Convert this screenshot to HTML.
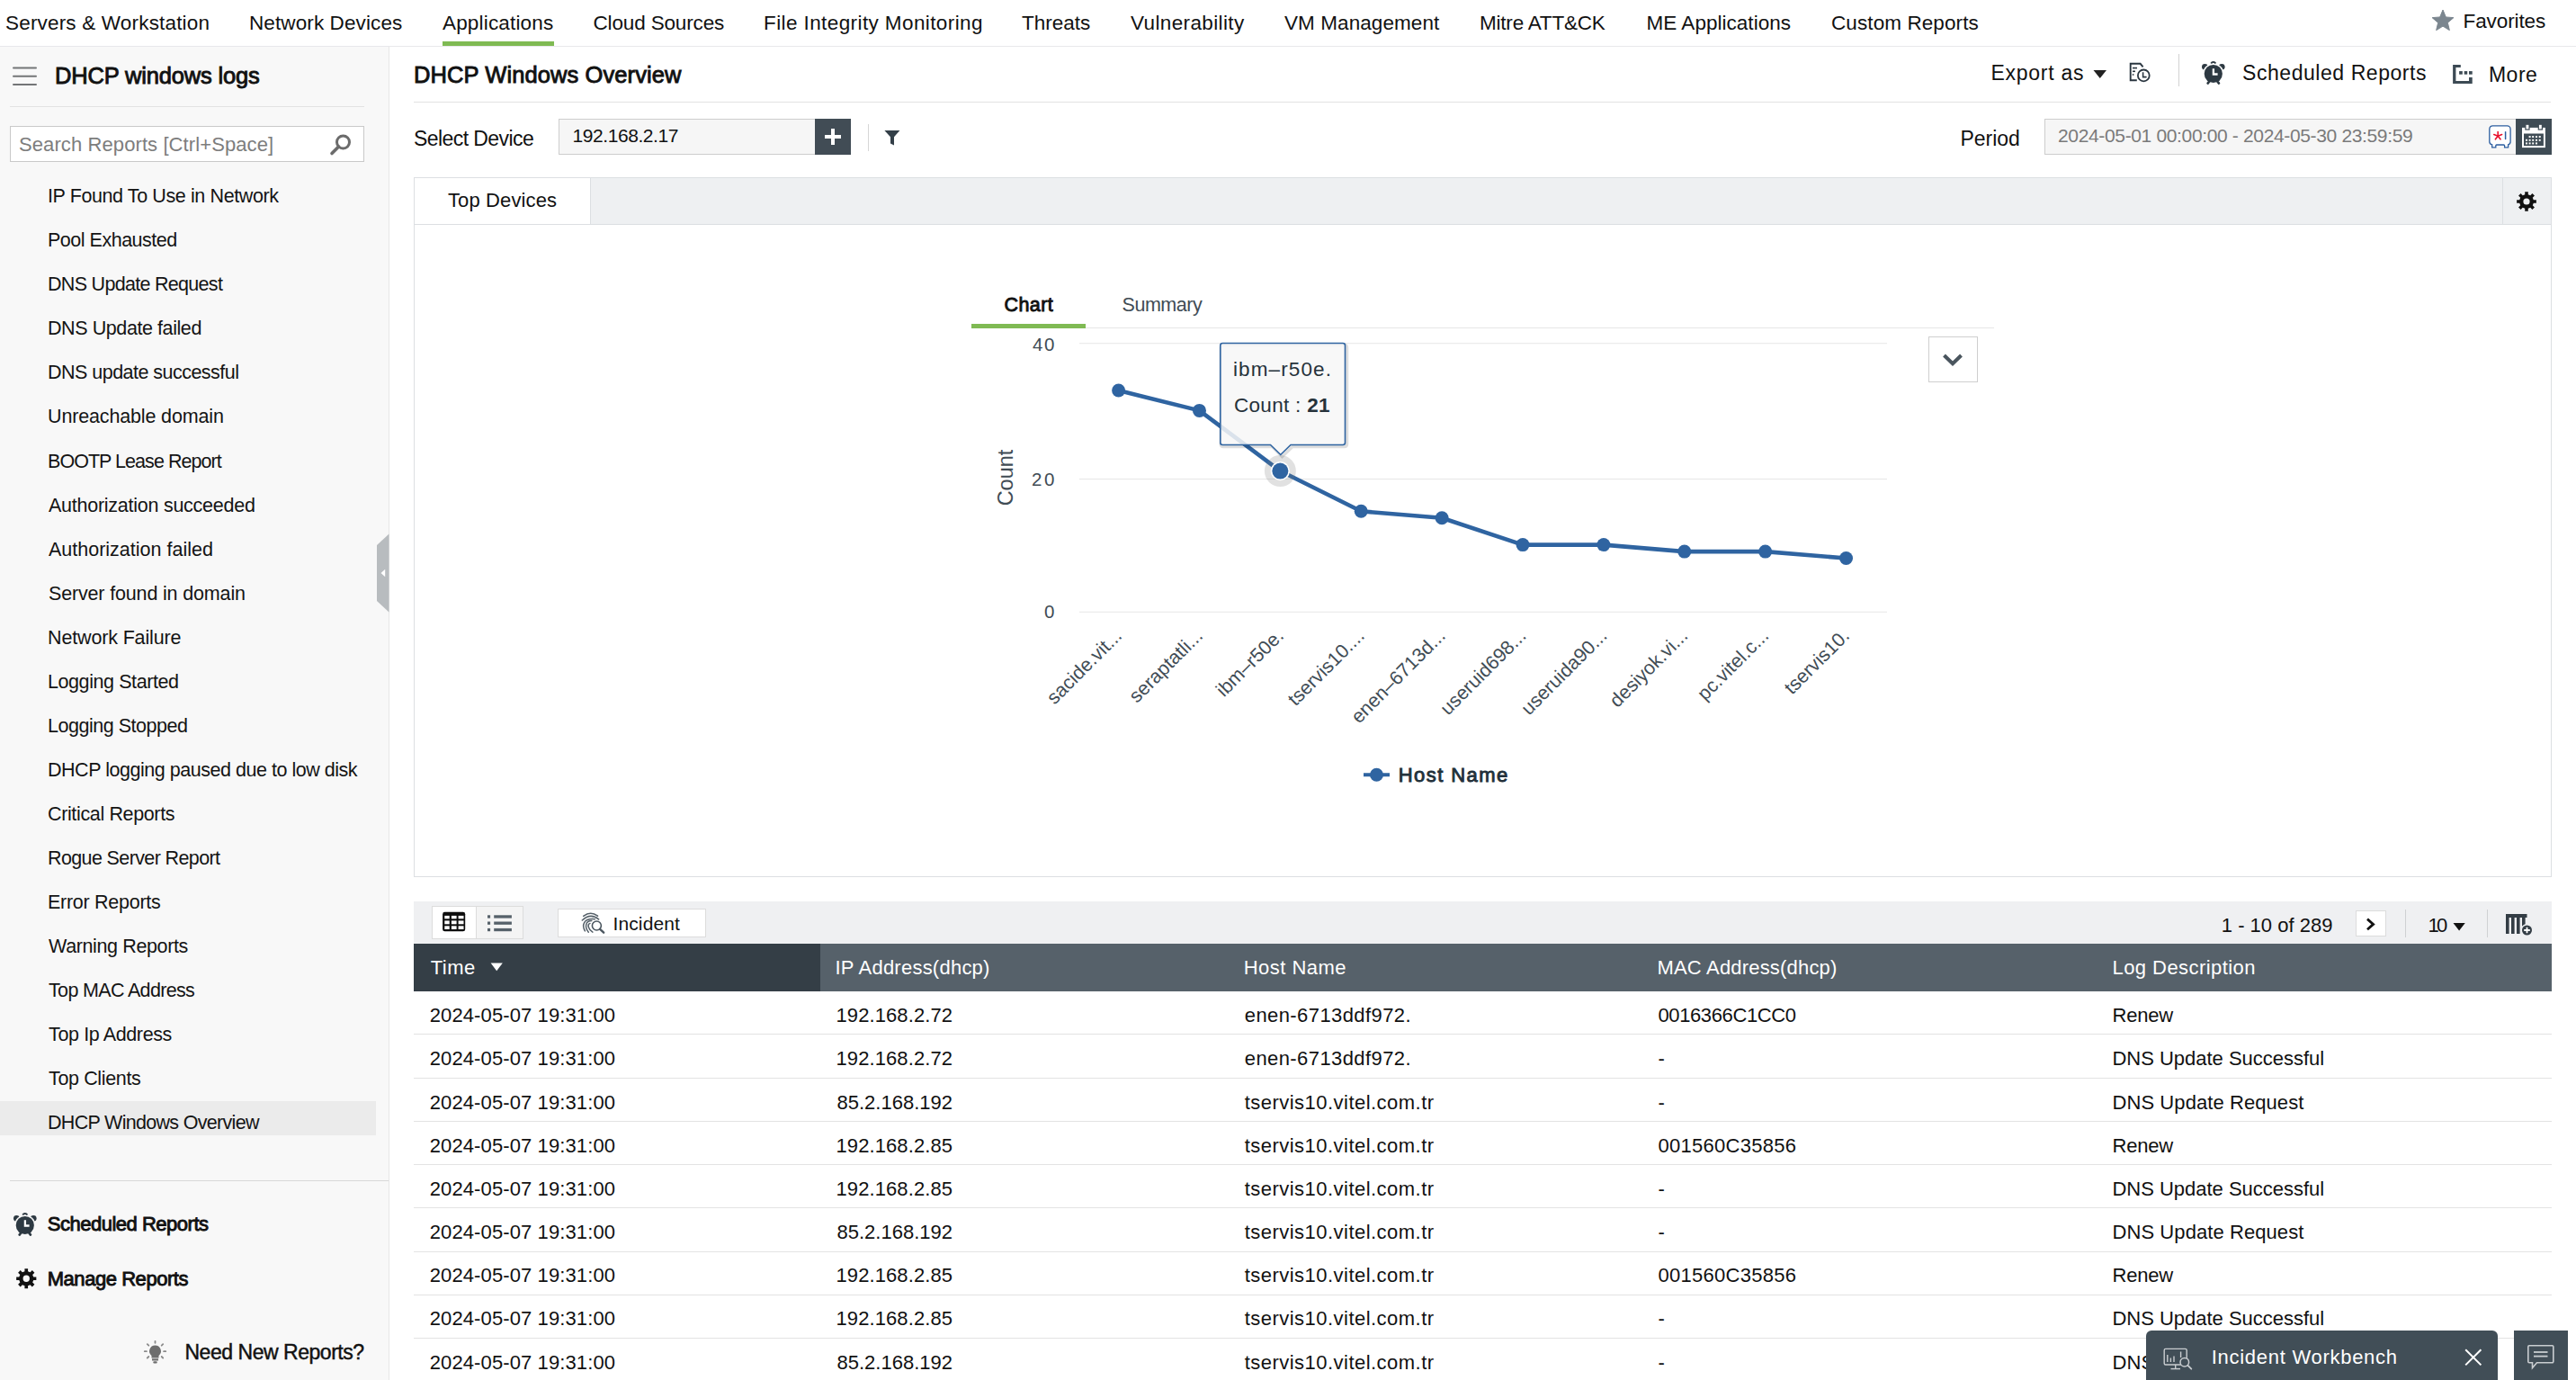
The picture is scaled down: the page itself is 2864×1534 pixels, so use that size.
<!DOCTYPE html>
<html><head><meta charset="utf-8"><title>DHCP Windows Overview</title>
<style>
html,body{margin:0;padding:0;}
body{width:2864px;height:1534px;overflow:hidden;position:relative;background:#fff;font-family:"Liberation Sans",sans-serif;}
.a{position:absolute;box-sizing:border-box;}
.t{position:absolute;white-space:nowrap;font-family:"Liberation Sans",sans-serif;}
svg{position:absolute;overflow:visible;}
svg text{font-family:"Liberation Sans",sans-serif;}
</style></head>
<body>
<!-- ===== top nav ===== -->
<div class="a" style="left:0;top:51px;width:2864px;height:1px;background:#e8e8eb"></div>
<div class="a" style="left:492px;top:46px;width:124px;height:5px;background:#7fba53"></div>
<svg style="left:2704px;top:11px" width="24" height="23" viewBox="0 0 24 23"><path d="M12.00,0.00 L15.29,7.97 L23.89,8.64 L17.33,14.23 L19.35,22.61 L12.00,18.10 L4.65,22.61 L6.67,14.23 L0.11,8.64 L8.71,7.97 Z" fill="#7b868f" stroke="#7b868f" stroke-width="1" stroke-linejoin="round"/></svg>

<!-- ===== sidebar ===== -->
<div class="a" style="left:0;top:52px;width:433px;height:1482px;background:#f8f8f8;border-right:1px solid #e6e6e6"></div>
<svg style="left:12px;top:72px" width="32" height="26" viewBox="12 72 32 26"><g stroke="#737577" stroke-width="2" stroke-linecap="round"><line x1="15" y1="75.6" x2="40" y2="75.6"/><line x1="15" y1="84.75" x2="40" y2="84.75"/><line x1="15" y1="93.9" x2="40" y2="93.9"/></g></svg>
<div class="a" style="left:11px;top:118px;width:394px;height:1px;background:#e2e2e2"></div>
<div class="a" style="left:11px;top:140px;width:394px;height:40px;background:#fff;border:1px solid #c9c9c9"></div>
<svg style="left:366px;top:148px" width="26" height="26" viewBox="0 0 26 26"><circle cx="15.5" cy="10" r="7" fill="none" stroke="#6b6b6b" stroke-width="3"/><line x1="10.5" y1="15" x2="3" y2="22.5" stroke="#6b6b6b" stroke-width="3.6" stroke-linecap="round"/></svg>
<div class="a" style="left:0;top:1224px;width:418px;height:38px;background:#ebebeb"></div>
<svg style="left:418px;top:592px" width="16" height="90" viewBox="418 592 16 90"><polygon points="432.5,593.5 419,606 419,668 432.5,680.5" fill="#b8bcbf"/><polygon points="423.5,637 428.2,632.8 428.2,641.2" fill="#fff"/></svg>
<div class="a" style="left:11px;top:1312px;width:421px;height:1px;background:#d9d9d9"></div>
<!-- alarm (sidebar) -->
<svg style="left:15px;top:1347px" width="26" height="28" viewBox="0 0 26 28"><circle cx="3.4" cy="7.3" r="3.4" fill="#2d3942"/><circle cx="22.2" cy="7.3" r="3.4" fill="#2d3942"/><circle cx="12.8" cy="15" r="11.6" fill="#f8f8f8"/><circle cx="12.8" cy="15" r="10.1" fill="#2d3942"/><path d="M10.2,3.4 A3.1,3.1 0 0 1 15.4,3.4" fill="none" stroke="#2d3942" stroke-width="1.9"/><line x1="8.2" y1="23.6" x2="6.6" y2="25.6" stroke="#2d3942" stroke-width="2.6" stroke-linecap="round"/><line x1="17.4" y1="23.6" x2="19" y2="25.6" stroke="#2d3942" stroke-width="2.6" stroke-linecap="round"/><path d="M12.9,9.2 V15.5 H17.6" fill="none" stroke="#fff" stroke-width="2.3"/></svg>
<!-- gear (sidebar) -->
<svg style="left:17.5px;top:1410px" width="22.5" height="22.5" viewBox="0 0 22 22"><path fill-rule="evenodd" fill="#111" d="M21.85,9.19 L21.85,12.81 L18.80,12.77 L17.77,15.27 L19.95,17.40 L17.40,19.95 L15.27,17.77 L12.77,18.80 L12.81,21.85 L9.19,21.85 L9.23,18.80 L6.73,17.77 L4.60,19.95 L2.05,17.40 L4.23,15.27 L3.20,12.77 L0.15,12.81 L0.15,9.19 L3.20,9.23 L4.23,6.73 L2.05,4.60 L4.60,2.05 L6.73,4.23 L9.23,3.20 L9.19,0.15 L12.81,0.15 L12.77,3.20 L15.27,4.23 L17.40,2.05 L19.95,4.60 L17.77,6.73 L18.80,9.23 Z M11,7.4 A3.6,3.6 0 1 0 11,14.6 A3.6,3.6 0 1 0 11,7.4 Z"/></svg>
<!-- bulb -->
<svg style="left:160px;top:1490px" width="26" height="27" viewBox="0 0 26 27"><path d="M12.5,5.5 a6.4,6.4 0 0 1 4,11.4 v2.6 h-8 v-2.6 a6.4,6.4 0 0 1 4,-11.4 z" fill="#6e6e6e"/><rect x="9" y="20.3" width="7" height="2.2" fill="#6e6e6e"/><rect x="10.3" y="23.2" width="4.4" height="2.2" rx="1" fill="#6e6e6e"/><g stroke="#8a8a8a" stroke-width="1.8" stroke-linecap="round"><line x1="12.5" y1="0.8" x2="12.5" y2="2.8"/><line x1="3.8" y1="4.2" x2="5.3" y2="5.7"/><line x1="21.2" y1="4.2" x2="19.7" y2="5.7"/><line x1="0.8" y1="12.2" x2="2.9" y2="12.2"/><line x1="24.2" y1="12.2" x2="22.1" y2="12.2"/><line x1="3.8" y1="19.5" x2="5.3" y2="18"/><line x1="21.2" y1="19.5" x2="19.7" y2="18"/></g></svg>

<!-- ===== main header ===== -->
<svg style="left:2326px;top:77px" width="18" height="12" viewBox="0 0 18 12"><polygon points="1.5,1 16,1 8.75,10" fill="#222"/></svg>
<svg style="left:2366px;top:68px" width="28" height="25" viewBox="2366 68 28 25"><path d="M2375.8,89.3 H2368.7 V70.8 H2379.6 L2382.6,74.3" fill="none" stroke="#2a3640" stroke-width="1.9"/><line x1="2371" y1="75.6" x2="2376" y2="75.6" stroke="#2a3640" stroke-width="1.6"/><line x1="2371" y1="79.3" x2="2374" y2="79.3" stroke="#2a3640" stroke-width="1.6"/><rect x="2370.8" y="82.2" width="1.6" height="1.6" fill="#2a3640"/><circle cx="2383.3" cy="83.9" r="6.4" fill="#fff" stroke="#2a3640" stroke-width="1.8"/><path d="M2382.6,80.3 V85.6 H2386.6" fill="none" stroke="#2a3640" stroke-width="1.6"/></svg>
<div class="a" style="left:2422px;top:59.5px;width:1px;height:36px;background:#d3d3d3"></div>
<svg style="left:2448px;top:67px" width="26" height="28" viewBox="0 0 26 28"><circle cx="3.4" cy="7.3" r="3.4" fill="#2d3942"/><circle cx="22.2" cy="7.3" r="3.4" fill="#2d3942"/><circle cx="12.8" cy="15" r="11.6" fill="#fff"/><circle cx="12.8" cy="15" r="10.1" fill="#2d3942"/><path d="M10.2,3.4 A3.1,3.1 0 0 1 15.4,3.4" fill="none" stroke="#2d3942" stroke-width="1.9"/><line x1="8.2" y1="23.6" x2="6.6" y2="25.6" stroke="#2d3942" stroke-width="2.6" stroke-linecap="round"/><line x1="17.4" y1="23.6" x2="19" y2="25.6" stroke="#2d3942" stroke-width="2.6" stroke-linecap="round"/><path d="M12.9,9.2 V15.5 H17.6" fill="none" stroke="#fff" stroke-width="2.3"/></svg>
<svg style="left:2726px;top:71px" width="24" height="23" viewBox="2726 71 24 23"><path d="M2727.1,71.9 H2735.8 V75 H2730.4 V90 H2745 V86.1 H2748.7 V93.1 H2727.1 Z" fill="#3c4a54"/><rect x="2734.1" y="79.1" width="3.7" height="3.6" fill="#3c4a54"/><rect x="2739.7" y="79.1" width="3.5" height="3.6" fill="#3c4a54"/><rect x="2745" y="79.1" width="3.7" height="3.6" fill="#3c4a54"/></svg>
<div class="a" style="left:460px;top:113px;width:2376px;height:1px;background:#e2e2e2"></div>

<!-- device row -->
<div class="a" style="left:621px;top:132px;width:286px;height:40px;background:#f6f6f6;border:1px solid #cdcdcd"></div>
<div class="a" style="left:906px;top:132px;width:40px;height:40px;background:#414c55"></div>
<div class="a" style="left:917px;top:150px;width:18px;height:4.2px;background:#fff"></div>
<div class="a" style="left:923.9px;top:143px;width:4.2px;height:18px;background:#fff"></div>
<div class="a" style="left:965px;top:138px;width:1px;height:29.5px;background:#d6d6d6"></div>
<svg style="left:982px;top:144px" width="20" height="19" viewBox="982 144 20 19"><path d="M983.4,145.1 H1000.4 L994,152.3 V161.6 L990,159.4 V152.3 Z" fill="#333f48"/></svg>
<div class="a" style="left:2273px;top:132px;width:525px;height:40px;background:#f6f6f6;border:1px solid #cdcdcd"></div>
<svg style="left:2766px;top:138px" width="28" height="28" viewBox="2766 138 28 28"><path d="M2771.5,139.8 H2787.5 A3.6,3.6 0 0 1 2791.1,143.4 V157.4 A3.6,3.6 0 0 1 2788.6,160.8 V163.9 H2784.6 V161.8 A1.4,1.4 0 0 0 2783.2,161 H2776.2 A1.4,1.4 0 0 0 2774.8,161.8 V163.9 H2770.7 V160.8 A3.6,3.6 0 0 1 2767.8,157.4 V143.4 A3.6,3.6 0 0 1 2771.5,139.8 Z" fill="#fff" stroke="#2c5ea0" stroke-width="1.3"/><g stroke="#e8112d" stroke-width="1.6" stroke-linecap="round"><line x1="2777.2" y1="146.6" x2="2777.2" y2="151.2"/><line x1="2772.8" y1="149.6" x2="2777.2" y2="151.2"/><line x1="2781.6" y1="149.6" x2="2777.2" y2="151.2"/><line x1="2774.4" y1="154.8" x2="2777.2" y2="151.2"/><line x1="2780" y1="154.8" x2="2777.2" y2="151.2"/></g><line x1="2785.6" y1="146.8" x2="2785.6" y2="154.4" stroke="#2c5ea0" stroke-width="1.5" stroke-linecap="round"/></svg>
<div class="a" style="left:2797px;top:132px;width:40px;height:40px;background:#3f4c55"></div>
<svg style="left:2797px;top:132px" width="40" height="40" viewBox="2797 132 40 40"><rect x="2805" y="142.9" width="23.9" height="20.2" fill="none" stroke="#fff" stroke-width="2"/><rect x="2805" y="142.9" width="23.9" height="5.6" fill="#fff"/><rect x="2807.9" y="138.2" width="4.1" height="5.8" fill="#fff" stroke="#3f4c55" stroke-width="1.2"/><rect x="2822.3" y="138.2" width="4.1" height="5.8" fill="#fff" stroke="#3f4c55" stroke-width="1.2"/><g fill="#fff"><rect x="2811.6" y="151" width="2" height="2"/><rect x="2815.2" y="151" width="2" height="2"/><rect x="2819" y="151" width="2" height="2"/><rect x="2822.7" y="151" width="2" height="2"/><rect x="2808" y="154.8" width="2" height="2"/><rect x="2811.6" y="154.8" width="2" height="2"/><rect x="2815.2" y="154.8" width="2" height="2"/><rect x="2819" y="154.8" width="2" height="2"/><rect x="2822.7" y="154.8" width="2" height="2"/><rect x="2808" y="158.4" width="2" height="2"/><rect x="2811.6" y="158.4" width="2" height="2"/><rect x="2815.2" y="158.4" width="2" height="2"/><rect x="2819" y="158.4" width="2" height="2"/></g></svg>

<!-- ===== panel ===== -->
<div class="a" style="left:460px;top:197px;width:2377px;height:778px;border:1px solid #dcdfe2"></div>
<div class="a" style="left:461px;top:198px;width:2375px;height:51px;background:#eef0f2"></div>
<div class="a" style="left:461px;top:198px;width:196px;height:51px;background:#fff;border-right:1px solid #dcdfe2"></div>
<div class="a" style="left:461px;top:249px;width:2375px;height:1px;background:#dcdfe2"></div>
<div class="a" style="left:2782px;top:198px;width:1px;height:51px;background:#dcdfe2"></div>
<svg style="left:2797.5px;top:212.5px" width="22" height="22" viewBox="0 0 22 22"><path fill-rule="evenodd" fill="#111" d="M21.85,9.19 L21.85,12.81 L18.80,12.77 L17.77,15.27 L19.95,17.40 L17.40,19.95 L15.27,17.77 L12.77,18.80 L12.81,21.85 L9.19,21.85 L9.23,18.80 L6.73,17.77 L4.60,19.95 L2.05,17.40 L4.23,15.27 L3.20,12.77 L0.15,12.81 L0.15,9.19 L3.20,9.23 L4.23,6.73 L2.05,4.60 L4.60,2.05 L6.73,4.23 L9.23,3.20 L9.19,0.15 L12.81,0.15 L12.77,3.20 L15.27,4.23 L17.40,2.05 L19.95,4.60 L17.77,6.73 L18.80,9.23 Z M11,7.4 A3.6,3.6 0 1 0 11,14.6 A3.6,3.6 0 1 0 11,7.4 Z"/></svg>

<!-- chart svg (page coordinates) -->
<svg style="left:0;top:0" width="2864" height="1534" viewBox="0 0 2864 1534">
<line x1="1080" y1="364.5" x2="2217" y2="364.5" stroke="#e6e6e6" stroke-width="1"/>
<rect x="1080" y="360" width="127" height="5" fill="#7fba53"/>
<rect x="2144.5" y="374.5" width="54" height="50" fill="#fff" stroke="#cfcfcf" stroke-width="1"/>
<polyline points="2161.5,395 2171,404.3 2180.5,395" fill="none" stroke="#4a555e" stroke-width="4"/>
<g stroke="#e6e6e6" stroke-width="1.2">
<line x1="1200" y1="381.75" x2="2098" y2="381.75"/>
<line x1="1200" y1="532.5" x2="2098" y2="532.5"/>
<line x1="1200" y1="680.25" x2="2098" y2="680.25"/>
</g>
<text transform="translate(1126,531) rotate(-90)" text-anchor="middle" style="font-size:23.5px;fill:#414c55">Count</text>
<path d="M1243.60,433.99 L1333.48,456.38 L1423.36,523.54 L1513.24,568.31 L1603.12,575.77 L1693.00,605.62 L1782.88,605.62 L1872.76,613.09 L1962.64,613.09 L2052.52,620.55" fill="none" stroke="#2f64a1" stroke-width="4.6" stroke-linejoin="round" stroke-linecap="round"/>
<circle cx="1243.60" cy="433.99" r="7.5" fill="#2f64a1"/>
<circle cx="1333.48" cy="456.38" r="7.5" fill="#2f64a1"/>
<circle cx="1513.24" cy="568.31" r="7.5" fill="#2f64a1"/>
<circle cx="1603.12" cy="575.77" r="7.5" fill="#2f64a1"/>
<circle cx="1693.00" cy="605.62" r="7.5" fill="#2f64a1"/>
<circle cx="1782.88" cy="605.62" r="7.5" fill="#2f64a1"/>
<circle cx="1872.76" cy="613.09" r="7.5" fill="#2f64a1"/>
<circle cx="1962.64" cy="613.09" r="7.5" fill="#2f64a1"/>
<circle cx="2052.52" cy="620.55" r="7.5" fill="#2f64a1"/>
<circle cx="1423.36" cy="523.54" r="17.5" fill="rgba(120,120,120,0.22)"/>
<circle cx="1423.36" cy="523.54" r="10.6" fill="#fff"/>
<circle cx="1423.36" cy="523.54" r="9" fill="#2f64a1"/>
<path d="M1359.8,383.5 H1495 A2.5,2.5 0 0 1 1497.5,386 V494 A2.5,2.5 0 0 1 1495,496.5 H1437 L1425.5,507.5 L1414.5,496.5 H1359.8 A2.5,2.5 0 0 1 1357.3,494 V386 A2.5,2.5 0 0 1 1359.8,383.5 Z" fill="none" stroke="rgba(0,0,0,0.13)" stroke-width="3.5"/>
<path d="M1359.3,381.5 H1493 A2.5,2.5 0 0 1 1495.5,384 V492 A2.5,2.5 0 0 1 1493,494.5 H1435 L1423.75,505.5 L1412.5,494.5 H1359.3 A2.5,2.5 0 0 1 1356.8,492 V384 A2.5,2.5 0 0 1 1359.3,381.5 Z" fill="rgba(247,247,247,0.86)" stroke="#2f64a1" stroke-width="1.6"/>
<text x="1372" y="458" style="font-size:22.5px;fill:#26323b;letter-spacing:0.3px">Count : <tspan style="font-weight:700">21</tspan></text>
<line x1="1516" y1="861.25" x2="1545" y2="861.25" stroke="#2f64a1" stroke-width="4"/>
<circle cx="1530.5" cy="861.25" r="7.5" fill="#2f64a1"/>
<text x="1116.50" y="345.50" style="font-size:21.5px;fill:#111;stroke:#111;stroke-width:0.9px;letter-spacing:0.412px;">Chart</text>
<text x="1247.50" y="345.50" style="font-size:21.5px;fill:#414c55;letter-spacing:-0.456px;">Summary</text>
<text x="1148.10" y="390.00" style="font-size:20.5px;fill:#414c55;letter-spacing:1.499px;">40</text>
<text x="1147.10" y="540.00" style="font-size:20.5px;fill:#414c55;letter-spacing:2.499px;">20</text>
<text x="1161.00" y="687.00" style="font-size:20.5px;fill:#414c55;">0</text>
<text x="1371.00" y="417.50" style="font-size:22.5px;fill:#26323b;letter-spacing:1.119px;">ibm–r50e.</text>
<text x="1554.75" y="869.00" style="font-size:22px;fill:#22303a;stroke:#22303a;stroke-width:0.9px;letter-spacing:1.432px;">Host Name</text>
<text transform="translate(1248.60,708) rotate(-45)" text-anchor="end" style="font-size:21.5px;fill:#414c55">sacide.vit...</text>
<text transform="translate(1338.48,708) rotate(-45)" text-anchor="end" style="font-size:21.5px;fill:#414c55">seraptatli...</text>
<text transform="translate(1428.36,708) rotate(-45)" text-anchor="end" style="font-size:21.5px;fill:#414c55">ibm–r50e.</text>
<text transform="translate(1518.24,708) rotate(-45)" text-anchor="end" style="font-size:21.5px;fill:#414c55">tservis10....</text>
<text transform="translate(1608.12,708) rotate(-45)" text-anchor="end" style="font-size:21.5px;fill:#414c55">enen–6713d...</text>
<text transform="translate(1698.00,708) rotate(-45)" text-anchor="end" style="font-size:21.5px;fill:#414c55">useruid698...</text>
<text transform="translate(1787.88,708) rotate(-45)" text-anchor="end" style="font-size:21.5px;fill:#414c55">useruida90...</text>
<text transform="translate(1877.76,708) rotate(-45)" text-anchor="end" style="font-size:21.5px;fill:#414c55">desiyok.vi...</text>
<text transform="translate(1967.64,708) rotate(-45)" text-anchor="end" style="font-size:21.5px;fill:#414c55">pc.vitel.c...</text>
<text transform="translate(2057.52,708) rotate(-45)" text-anchor="end" style="font-size:21.5px;fill:#414c55">tservis10.</text>
</svg>

<!-- ===== table toolbar ===== -->
<div class="a" style="left:460px;top:1002px;width:2377px;height:47px;background:#eff0f2"></div>
<div class="a" style="left:479.5px;top:1006.5px;width:102px;height:37px;background:#f4f4f4;border:1px solid #dcdcdc"></div>
<div class="a" style="left:480.5px;top:1007.5px;width:49px;height:35px;background:#fff;border-right:1px solid #dcdcdc"></div>
<svg style="left:491px;top:1013px" width="28" height="24" viewBox="491 1013 28 24"><rect x="492.1" y="1013.8" width="25.1" height="21.5" rx="2.4" fill="#0d0d0d"/><g fill="#fff"><rect x="494.3" y="1017.9" width="5.4" height="3.4"/><rect x="501.9" y="1017.9" width="5.7" height="3.4"/><rect x="509.6" y="1017.9" width="5.9" height="3.4"/><rect x="494.3" y="1023.4" width="5.4" height="3.9"/><rect x="501.9" y="1023.4" width="5.7" height="3.9"/><rect x="509.6" y="1023.4" width="5.9" height="3.9"/><rect x="494.3" y="1029.3" width="5.4" height="3.7"/><rect x="501.9" y="1029.3" width="5.7" height="3.7"/><rect x="509.6" y="1029.3" width="5.9" height="3.7"/></g></svg>
<svg style="left:540px;top:1016px" width="30" height="21" viewBox="540 1016 30 21"><g fill="#56616a"><rect x="542" y="1017.3" width="3.1" height="3.3"/><rect x="549.2" y="1017.3" width="19.7" height="3.3"/><rect x="542" y="1024.5" width="3.1" height="3.3"/><rect x="549.2" y="1024.5" width="19.7" height="3.3"/><rect x="542" y="1031.9" width="3.1" height="3.3"/><rect x="549.2" y="1031.9" width="19.7" height="3.3"/></g></svg>
<div class="a" style="left:619.5px;top:1009.5px;width:165.5px;height:32.5px;background:#fff;border:1px solid #dcdcdc"></div>
<svg style="left:643px;top:1011px" width="34" height="30" viewBox="643 1011 34 30"><g fill="none" stroke="#56616a" stroke-width="1.5" stroke-linecap="round"><path d="M648.7,1018.4 Q656.5,1012.3 664.5,1018.2"/><path d="M647.3,1023 Q656.5,1014.3 665.6,1021.9"/><path d="M650.4,1034.9 C647,1029 648,1020.5 661.3,1021.7"/><path d="M654.3,1036.2 C650,1031 650.5,1023.5 657.8,1023.6"/><path d="M658.9,1036.2 C654,1033 652.5,1027.5 656,1026.4"/></g><circle cx="663.4" cy="1029" r="5" fill="#fff" stroke="#4a555e" stroke-width="1.6"/><line x1="667.1" y1="1032.8" x2="671.2" y2="1036.7" stroke="#4a555e" stroke-width="2.3" stroke-linecap="round"/></svg>
<div class="a" style="left:2619.25px;top:1012px;width:33.25px;height:29.25px;background:#fff;border:1px solid #dcdcdc"></div>
<svg style="left:2629px;top:1019px" width="14" height="17" viewBox="2629 1019 14 17"><polyline points="2632,1021.6 2638.6,1027.4 2632,1033.2" fill="none" stroke="#111" stroke-width="2.8"/></svg>
<div class="a" style="left:2673.5px;top:1011px;width:1px;height:31px;background:#cfd1d3"></div>
<svg style="left:2726px;top:1025px" width="16" height="11" viewBox="0 0 16 11"><polygon points="1.5,1 14.75,1 8.1,9.5" fill="#111"/></svg>
<div class="a" style="left:2764.5px;top:1011px;width:1px;height:31px;background:#cfd1d3"></div>
<svg style="left:2785px;top:1015px" width="32" height="27" viewBox="2785 1015 32 27"><rect x="2786" y="1016" width="23.5" height="4" fill="#333d45"/><g fill="#333d45"><rect x="2786" y="1020" width="3.6" height="18"/><rect x="2792" y="1020" width="3.6" height="18"/><rect x="2798" y="1020" width="3.6" height="18"/><rect x="2804" y="1020" width="3.6" height="10"/></g><circle cx="2809.5" cy="1034" r="6.2" fill="#333d45" stroke="#eff0f2" stroke-width="1.4"/><path d="M2806.2,1034 H2812.8 M2809.5,1030.7 V1037.3" stroke="#fff" stroke-width="1.8"/></svg>

<!-- ===== table ===== -->
<div class="a" style="left:460px;top:1049px;width:452px;height:52.75px;background:#343e46"></div>
<div class="a" style="left:912px;top:1049px;width:1925px;height:52.75px;background:#56616a"></div>
<svg style="left:544px;top:1069px" width="16" height="12" viewBox="0 0 16 12"><polygon points="1.6,1.6 14.8,1.6 8.2,10.2" fill="#fff"/></svg>
<div class="a" style="left:460px;top:1149px;width:2377px;height:1px;background:#e3e3e3"></div>
<div class="a" style="left:460px;top:1198px;width:2377px;height:1px;background:#e3e3e3"></div>
<div class="a" style="left:460px;top:1246px;width:2377px;height:1px;background:#e3e3e3"></div>
<div class="a" style="left:460px;top:1294px;width:2377px;height:1px;background:#e3e3e3"></div>
<div class="a" style="left:460px;top:1342px;width:2377px;height:1px;background:#e3e3e3"></div>
<div class="a" style="left:460px;top:1390.5px;width:2377px;height:1px;background:#e3e3e3"></div>
<div class="a" style="left:460px;top:1438.5px;width:2377px;height:1px;background:#e3e3e3"></div>
<div class="a" style="left:460px;top:1486.5px;width:2377px;height:1px;background:#e3e3e3"></div>

<div class="t" style="left:6.00px;top:15px;font-size:22.5px;line-height:22.5px;color:#111;letter-spacing:0.180px;">Servers &amp; Workstation</div>
<div class="t" style="left:277.00px;top:15px;font-size:22.5px;line-height:22.5px;color:#111;letter-spacing:0.104px;">Network Devices</div>
<div class="t" style="left:492.00px;top:15px;font-size:22.5px;line-height:22.5px;color:#111;letter-spacing:0.175px;">Applications</div>
<div class="t" style="left:659.50px;top:15px;font-size:22.5px;line-height:22.5px;color:#111;letter-spacing:-0.152px;">Cloud Sources</div>
<div class="t" style="left:849.00px;top:15px;font-size:22.5px;line-height:22.5px;color:#111;letter-spacing:0.403px;">File Integrity Monitoring</div>
<div class="t" style="left:1136.00px;top:15px;font-size:22.5px;line-height:22.5px;color:#111;">Threats</div>
<div class="t" style="left:1257.00px;top:15px;font-size:22.5px;line-height:22.5px;color:#111;letter-spacing:0.377px;">Vulnerability</div>
<div class="t" style="left:1428.00px;top:15px;font-size:22.5px;line-height:22.5px;color:#111;letter-spacing:0.077px;">VM Management</div>
<div class="t" style="left:1645.00px;top:15px;font-size:22.5px;line-height:22.5px;color:#111;letter-spacing:-0.212px;">Mitre ATT&amp;CK</div>
<div class="t" style="left:1830.50px;top:15px;font-size:22.5px;line-height:22.5px;color:#111;letter-spacing:0.030px;">ME Applications</div>
<div class="t" style="left:2036.00px;top:15px;font-size:22.5px;line-height:22.5px;color:#111;letter-spacing:0.092px;">Custom Reports</div>
<div class="t" style="left:2738.50px;top:13px;font-size:22.5px;line-height:22.5px;color:#111;letter-spacing:-0.097px;">Favorites</div>
<div class="t" style="left:60.95px;top:72px;font-size:25.5px;line-height:25.5px;color:#111;letter-spacing:-0.165px;-webkit-text-stroke:0.9px #111;">DHCP windows logs</div>
<div class="t" style="left:21.00px;top:150px;font-size:22px;line-height:22px;color:#7d7d7d;letter-spacing:0.096px;">Search Reports [Ctrl+Space]</div>
<div class="t" style="left:53.00px;top:208px;font-size:21.5px;line-height:21.5px;color:#141414;letter-spacing:-0.397px;">IP Found To Use in Network</div>
<div class="t" style="left:53.00px;top:257px;font-size:21.5px;line-height:21.5px;color:#141414;letter-spacing:-0.488px;">Pool Exhausted</div>
<div class="t" style="left:53.00px;top:306px;font-size:21.5px;line-height:21.5px;color:#141414;letter-spacing:-0.699px;">DNS Update Request</div>
<div class="t" style="left:53.00px;top:355px;font-size:21.5px;line-height:21.5px;color:#141414;letter-spacing:-0.419px;">DNS Update failed</div>
<div class="t" style="left:53.00px;top:404px;font-size:21.5px;line-height:21.5px;color:#141414;letter-spacing:-0.525px;">DNS update successful</div>
<div class="t" style="left:53.00px;top:453px;font-size:21.5px;line-height:21.5px;color:#141414;letter-spacing:-0.150px;">Unreachable domain</div>
<div class="t" style="left:53.00px;top:503px;font-size:21.5px;line-height:21.5px;color:#141414;letter-spacing:-0.956px;">BOOTP Lease Report</div>
<div class="t" style="left:54.00px;top:552px;font-size:21.5px;line-height:21.5px;color:#141414;letter-spacing:-0.255px;">Authorization succeeded</div>
<div class="t" style="left:54.00px;top:601px;font-size:21.5px;line-height:21.5px;color:#141414;">Authorization failed</div>
<div class="t" style="left:54.00px;top:650px;font-size:21.5px;line-height:21.5px;color:#141414;letter-spacing:-0.159px;">Server found in domain</div>
<div class="t" style="left:53.00px;top:699px;font-size:21.5px;line-height:21.5px;color:#141414;letter-spacing:-0.149px;">Network Failure</div>
<div class="t" style="left:53.00px;top:748px;font-size:21.5px;line-height:21.5px;color:#141414;letter-spacing:-0.418px;">Logging Started</div>
<div class="t" style="left:53.00px;top:797px;font-size:21.5px;line-height:21.5px;color:#141414;letter-spacing:-0.474px;">Logging Stopped</div>
<div class="t" style="left:53.00px;top:846px;font-size:21.5px;line-height:21.5px;color:#141414;letter-spacing:-0.469px;">DHCP logging paused due to low disk</div>
<div class="t" style="left:53.00px;top:895px;font-size:21.5px;line-height:21.5px;color:#141414;letter-spacing:-0.363px;">Critical Reports</div>
<div class="t" style="left:53.00px;top:944px;font-size:21.5px;line-height:21.5px;color:#141414;letter-spacing:-0.621px;">Rogue Server Report</div>
<div class="t" style="left:53.00px;top:993px;font-size:21.5px;line-height:21.5px;color:#141414;letter-spacing:-0.273px;">Error Reports</div>
<div class="t" style="left:54.00px;top:1042px;font-size:21.5px;line-height:21.5px;color:#141414;letter-spacing:-0.369px;">Warning Reports</div>
<div class="t" style="left:54.00px;top:1091px;font-size:21.5px;line-height:21.5px;color:#141414;letter-spacing:-0.658px;">Top MAC Address</div>
<div class="t" style="left:54.00px;top:1140px;font-size:21.5px;line-height:21.5px;color:#141414;letter-spacing:-0.374px;">Top Ip Address</div>
<div class="t" style="left:54.00px;top:1189px;font-size:21.5px;line-height:21.5px;color:#141414;letter-spacing:-0.361px;">Top Clients</div>
<div class="t" style="left:53.00px;top:1238px;font-size:21.5px;line-height:21.5px;color:#141414;letter-spacing:-0.693px;">DHCP Windows Overview</div>
<div class="t" style="left:52.70px;top:1350px;font-size:22px;line-height:22px;color:#111;letter-spacing:-0.486px;-webkit-text-stroke:0.9px #111;">Scheduled Reports</div>
<div class="t" style="left:52.70px;top:1411px;font-size:22px;line-height:22px;color:#111;letter-spacing:-0.446px;-webkit-text-stroke:0.9px #111;">Manage Reports</div>
<div class="t" style="left:205.47px;top:1492px;font-size:23px;line-height:23px;color:#111;letter-spacing:-0.469px;-webkit-text-stroke:0.45px #111;">Need New Reports?</div>
<div class="t" style="left:459.95px;top:71px;font-size:25.5px;line-height:25.5px;color:#111;letter-spacing:0.094px;-webkit-text-stroke:0.9px #111;">DHCP Windows Overview</div>
<div class="t" style="left:2213.50px;top:70px;font-size:23px;line-height:23px;color:#111;letter-spacing:0.731px;">Export as</div>
<div class="t" style="left:2493.00px;top:70px;font-size:23px;line-height:23px;color:#111;letter-spacing:0.555px;">Scheduled Reports</div>
<div class="t" style="left:2767.00px;top:72px;font-size:23px;line-height:23px;color:#111;letter-spacing:0.463px;">More</div>
<div class="t" style="left:460.00px;top:143px;font-size:23px;line-height:23px;color:#111;letter-spacing:-0.569px;">Select Device</div>
<div class="t" style="left:636.50px;top:140px;font-size:21px;line-height:21px;color:#111;letter-spacing:-0.426px;">192.168.2.17</div>
<div class="t" style="left:2179.50px;top:143px;font-size:23px;line-height:23px;color:#111;letter-spacing:-0.039px;">Period</div>
<div class="t" style="left:2288.00px;top:140px;font-size:21px;line-height:21px;color:#7a7a7a;letter-spacing:-0.349px;">2024-05-01 00:00:00 - 2024-05-30 23:59:59</div>
<div class="t" style="left:498.00px;top:212px;font-size:22px;line-height:22px;color:#111;letter-spacing:0.117px;">Top Devices</div>
<div class="t" style="left:681.50px;top:1016px;font-size:21px;line-height:21px;color:#111;letter-spacing:0.112px;">Incident</div>
<div class="t" style="left:2469.75px;top:1018px;font-size:22px;line-height:22px;color:#111;letter-spacing:0.017px;">1 - 10 of 289</div>
<div class="t" style="left:2699.50px;top:1018px;font-size:22px;line-height:22px;color:#111;letter-spacing:-2.735px;">10</div>
<div class="t" style="left:478.75px;top:1065px;font-size:22px;line-height:22px;color:#ffffff;letter-spacing:0.471px;">Time</div>
<div class="t" style="left:928.50px;top:1065px;font-size:22px;line-height:22px;color:#ffffff;letter-spacing:0.238px;">IP Address(dhcp)</div>
<div class="t" style="left:1382.75px;top:1065px;font-size:22px;line-height:22px;color:#ffffff;letter-spacing:0.463px;">Host Name</div>
<div class="t" style="left:1842.50px;top:1065px;font-size:22px;line-height:22px;color:#ffffff;letter-spacing:0.185px;">MAC Address(dhcp)</div>
<div class="t" style="left:2348.50px;top:1065px;font-size:22px;line-height:22px;color:#ffffff;letter-spacing:0.437px;">Log Description</div>
<div class="t" style="left:477.75px;top:1118px;font-size:22px;line-height:22px;color:#111;letter-spacing:0.108px;">2024-05-07 19:31:00</div>
<div class="t" style="left:929.50px;top:1118px;font-size:22px;line-height:22px;color:#111;letter-spacing:0.094px;">192.168.2.72</div>
<div class="t" style="left:1383.75px;top:1118px;font-size:22px;line-height:22px;color:#111;letter-spacing:0.417px;">enen-6713ddf972.</div>
<div class="t" style="left:1843.50px;top:1118px;font-size:22px;line-height:22px;color:#111;letter-spacing:-0.395px;">0016366C1CC0</div>
<div class="t" style="left:2348.50px;top:1118px;font-size:22px;line-height:22px;color:#111;letter-spacing:-0.211px;">Renew</div>
<div class="t" style="left:477.75px;top:1166px;font-size:22px;line-height:22px;color:#111;letter-spacing:0.108px;">2024-05-07 19:31:00</div>
<div class="t" style="left:929.50px;top:1166px;font-size:22px;line-height:22px;color:#111;letter-spacing:0.094px;">192.168.2.72</div>
<div class="t" style="left:1383.75px;top:1166px;font-size:22px;line-height:22px;color:#111;letter-spacing:0.417px;">enen-6713ddf972.</div>
<div class="t" style="left:1843.50px;top:1166px;font-size:22px;line-height:22px;color:#111;">-</div>
<div class="t" style="left:2348.50px;top:1166px;font-size:22px;line-height:22px;color:#111;letter-spacing:-0.018px;">DNS Update Successful</div>
<div class="t" style="left:477.75px;top:1215px;font-size:22px;line-height:22px;color:#111;letter-spacing:0.108px;">2024-05-07 19:31:00</div>
<div class="t" style="left:930.50px;top:1215px;font-size:22px;line-height:22px;color:#111;">85.2.168.192</div>
<div class="t" style="left:1383.75px;top:1215px;font-size:22px;line-height:22px;color:#111;letter-spacing:0.468px;">tservis10.vitel.com.tr</div>
<div class="t" style="left:1843.50px;top:1215px;font-size:22px;line-height:22px;color:#111;">-</div>
<div class="t" style="left:2348.50px;top:1215px;font-size:22px;line-height:22px;color:#111;letter-spacing:0.077px;">DNS Update Request</div>
<div class="t" style="left:477.75px;top:1263px;font-size:22px;line-height:22px;color:#111;letter-spacing:0.108px;">2024-05-07 19:31:00</div>
<div class="t" style="left:929.50px;top:1263px;font-size:22px;line-height:22px;color:#111;letter-spacing:0.094px;">192.168.2.85</div>
<div class="t" style="left:1383.75px;top:1263px;font-size:22px;line-height:22px;color:#111;letter-spacing:0.468px;">tservis10.vitel.com.tr</div>
<div class="t" style="left:1843.50px;top:1263px;font-size:22px;line-height:22px;color:#111;letter-spacing:0.269px;">001560C35856</div>
<div class="t" style="left:2348.50px;top:1263px;font-size:22px;line-height:22px;color:#111;letter-spacing:-0.211px;">Renew</div>
<div class="t" style="left:477.75px;top:1311px;font-size:22px;line-height:22px;color:#111;letter-spacing:0.108px;">2024-05-07 19:31:00</div>
<div class="t" style="left:929.50px;top:1311px;font-size:22px;line-height:22px;color:#111;letter-spacing:0.094px;">192.168.2.85</div>
<div class="t" style="left:1383.75px;top:1311px;font-size:22px;line-height:22px;color:#111;letter-spacing:0.468px;">tservis10.vitel.com.tr</div>
<div class="t" style="left:1843.50px;top:1311px;font-size:22px;line-height:22px;color:#111;">-</div>
<div class="t" style="left:2348.50px;top:1311px;font-size:22px;line-height:22px;color:#111;letter-spacing:-0.018px;">DNS Update Successful</div>
<div class="t" style="left:477.75px;top:1359px;font-size:22px;line-height:22px;color:#111;letter-spacing:0.108px;">2024-05-07 19:31:00</div>
<div class="t" style="left:930.50px;top:1359px;font-size:22px;line-height:22px;color:#111;">85.2.168.192</div>
<div class="t" style="left:1383.75px;top:1359px;font-size:22px;line-height:22px;color:#111;letter-spacing:0.468px;">tservis10.vitel.com.tr</div>
<div class="t" style="left:1843.50px;top:1359px;font-size:22px;line-height:22px;color:#111;">-</div>
<div class="t" style="left:2348.50px;top:1359px;font-size:22px;line-height:22px;color:#111;letter-spacing:0.077px;">DNS Update Request</div>
<div class="t" style="left:477.75px;top:1407px;font-size:22px;line-height:22px;color:#111;letter-spacing:0.108px;">2024-05-07 19:31:00</div>
<div class="t" style="left:929.50px;top:1407px;font-size:22px;line-height:22px;color:#111;letter-spacing:0.094px;">192.168.2.85</div>
<div class="t" style="left:1383.75px;top:1407px;font-size:22px;line-height:22px;color:#111;letter-spacing:0.468px;">tservis10.vitel.com.tr</div>
<div class="t" style="left:1843.50px;top:1407px;font-size:22px;line-height:22px;color:#111;letter-spacing:0.269px;">001560C35856</div>
<div class="t" style="left:2348.50px;top:1407px;font-size:22px;line-height:22px;color:#111;letter-spacing:-0.211px;">Renew</div>
<div class="t" style="left:477.75px;top:1455px;font-size:22px;line-height:22px;color:#111;letter-spacing:0.108px;">2024-05-07 19:31:00</div>
<div class="t" style="left:929.50px;top:1455px;font-size:22px;line-height:22px;color:#111;letter-spacing:0.094px;">192.168.2.85</div>
<div class="t" style="left:1383.75px;top:1455px;font-size:22px;line-height:22px;color:#111;letter-spacing:0.468px;">tservis10.vitel.com.tr</div>
<div class="t" style="left:1843.50px;top:1455px;font-size:22px;line-height:22px;color:#111;">-</div>
<div class="t" style="left:2348.50px;top:1455px;font-size:22px;line-height:22px;color:#111;letter-spacing:-0.018px;">DNS Update Successful</div>
<div class="t" style="left:477.75px;top:1504px;font-size:22px;line-height:22px;color:#111;letter-spacing:0.108px;">2024-05-07 19:31:00</div>
<div class="t" style="left:930.50px;top:1504px;font-size:22px;line-height:22px;color:#111;">85.2.168.192</div>
<div class="t" style="left:1383.75px;top:1504px;font-size:22px;line-height:22px;color:#111;letter-spacing:0.468px;">tservis10.vitel.com.tr</div>
<div class="t" style="left:1843.50px;top:1504px;font-size:22px;line-height:22px;color:#111;">-</div>
<div class="t" style="left:2348.50px;top:1504px;font-size:22px;line-height:22px;color:#111;letter-spacing:0.077px;">DNS Update Request</div>

<!-- ===== incident workbench ===== -->
<div class="a" style="left:2386.25px;top:1479.25px;width:390.5px;height:60px;background:#414e57;border-radius:6px 6px 0 0"></div>
<div class="t" style="left:2458.75px;top:1498px;font-size:22px;line-height:22px;color:#ffffff;letter-spacing:0.718px;">Incident Workbench</div>
<svg style="left:2404px;top:1497px" width="36" height="28" viewBox="2404 1497 36 28"><g fill="none" stroke="#c9cdd0" stroke-width="1.4"><rect x="2406.2" y="1499.4" width="25" height="17.6" rx="1.5"/><line x1="2418.7" y1="1517" x2="2418.7" y2="1521.4"/><line x1="2413.5" y1="1521.6" x2="2424" y2="1521.6"/><path d="M2409.8,1514 V1506 M2413.4,1514 V1509.5 M2417,1514 V1507.5 M2424.6,1509 V1502.6"/></g><circle cx="2428.8" cy="1514.2" r="4.8" fill="#414e57" stroke="#c9cdd0" stroke-width="1.5"/><line x1="2432.3" y1="1517.7" x2="2436.3" y2="1521.7" stroke="#c9cdd0" stroke-width="1.8" stroke-linecap="round"/></svg>
<svg style="left:2739px;top:1498px" width="22" height="22" viewBox="2739 1498 22 22"><path d="M2741.2,1500.2 L2758.4,1517.4 M2758.4,1500.2 L2741.2,1517.4" stroke="#fff" stroke-width="2"/></svg>
<div class="a" style="left:2795px;top:1479.25px;width:60px;height:60px;background:#414e57"></div>
<svg style="left:2809px;top:1494px" width="32" height="30" viewBox="2809 1494 32 30"><path d="M2812,1495.8 H2837.6 A1.2,1.2 0 0 1 2838.8,1497 V1513.6 A1.2,1.2 0 0 1 2837.6,1514.8 H2820.5 L2815.5,1520.6 V1514.8 H2812 A1.2,1.2 0 0 1 2810.8,1513.6 V1497 A1.2,1.2 0 0 1 2812,1495.8 Z" fill="none" stroke="#c9cdd0" stroke-width="1.6"/><line x1="2817" y1="1503" x2="2832.5" y2="1503" stroke="#c9cdd0" stroke-width="1.8"/><line x1="2817" y1="1507.6" x2="2832.5" y2="1507.6" stroke="#c9cdd0" stroke-width="1.8"/></svg>
</body></html>
